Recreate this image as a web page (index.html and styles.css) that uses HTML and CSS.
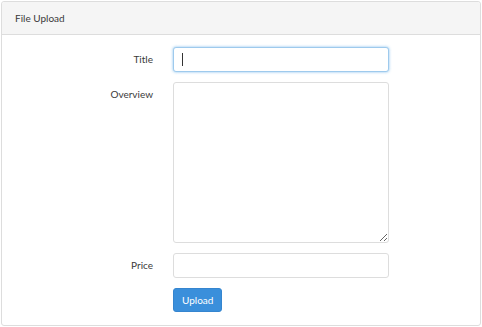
FILE: index.html
```html
<!DOCTYPE html>
<html lang="en">

<head>
    <meta charset="UTF-8">
    <meta name="viewport" content="width=device-width, initial-scale=1.0">
    <title>File Upload</title>
    <link rel="stylesheet" href="styles.css">
</head>

<body>
    <div class="panel">
        <div class="panel-heading">File Upload</div>
        <form class="panel-body upload-form">
            <label for="title" class="control-label">Title</label>
            <div class="field">
                <input type="text" id="title" name="title" class="form-control is-focused">
                <span class="caret"></span>
            </div>

            <label for="overview" class="control-label">Overview</label>
            <textarea id="overview" name="overview" class="form-control overview"></textarea>

            <label for="price" class="control-label">Price</label>
            <input type="text" id="price" name="price" class="form-control">

            <div></div>
            <div class="actions">
                <button type="submit" class="btn-primary">Upload</button>
            </div>
        </form>
    </div>
</body>

</html>
```

FILE: styles.css
```css
body {
    font-family: Lato, "Open Sans", Arial, sans-serif;
    font-size: 10px;
    font-weight: 400;
    color: #3a3a3a;
    margin: 0;
    padding: 1px;
    background-color: #fff;
}

.panel {
    border: 1px solid #ddd;
    border-radius: 3px;
    background-color: #fff;
    height: 325px;
    box-sizing: border-box;
}

.panel-heading {
    height: 32px;
    line-height: 32px;
    padding: 0 13px;
    background-color: #f5f5f5;
    border-bottom: 1px solid #ddd;
    border-radius: 3px 3px 0 0;
}

.upload-form {
    display: grid;
    grid-template-columns: 151px 216px;
    column-gap: 20px;
    row-gap: 10px;
    padding-top: 12px;
}

.control-label {
    text-align: right;
    line-height: 25px;
    font-weight: 400;
}

.field {
    position: relative;
}

.form-control {
    display: block;
    width: 100%;
    height: 25px;
    box-sizing: border-box;
    padding: 4px 8px;
    font-family: inherit;
    font-size: 10px;
    color: #555;
    border: 1px solid #ddd;
    border-radius: 3px;
    background-color: #fff;
    outline: none;
}

.form-control.is-focused {
    border-color: #9ecaed;
    box-shadow: 0 0 3px rgba(102, 175, 233, 0.8);
}

/* text cursor in the focused field */
.caret {
    position: absolute;
    left: 9px;
    top: 6px;
    width: 1px;
    height: 13px;
    background-color: #333;
}

.overview {
    height: 161px;
    resize: vertical;
}

.btn-primary {
    height: 24px;
    padding: 0 8px;
    font-family: inherit;
    font-size: 10px;
    font-weight: 400;
    color: #fff;
    background-color: #3a8fdb;
    border: 1px solid #3585cf;
    border-radius: 3px;
    cursor: pointer;
}

.btn-primary:hover {
    background-color: #2f7bc2;
}
```
